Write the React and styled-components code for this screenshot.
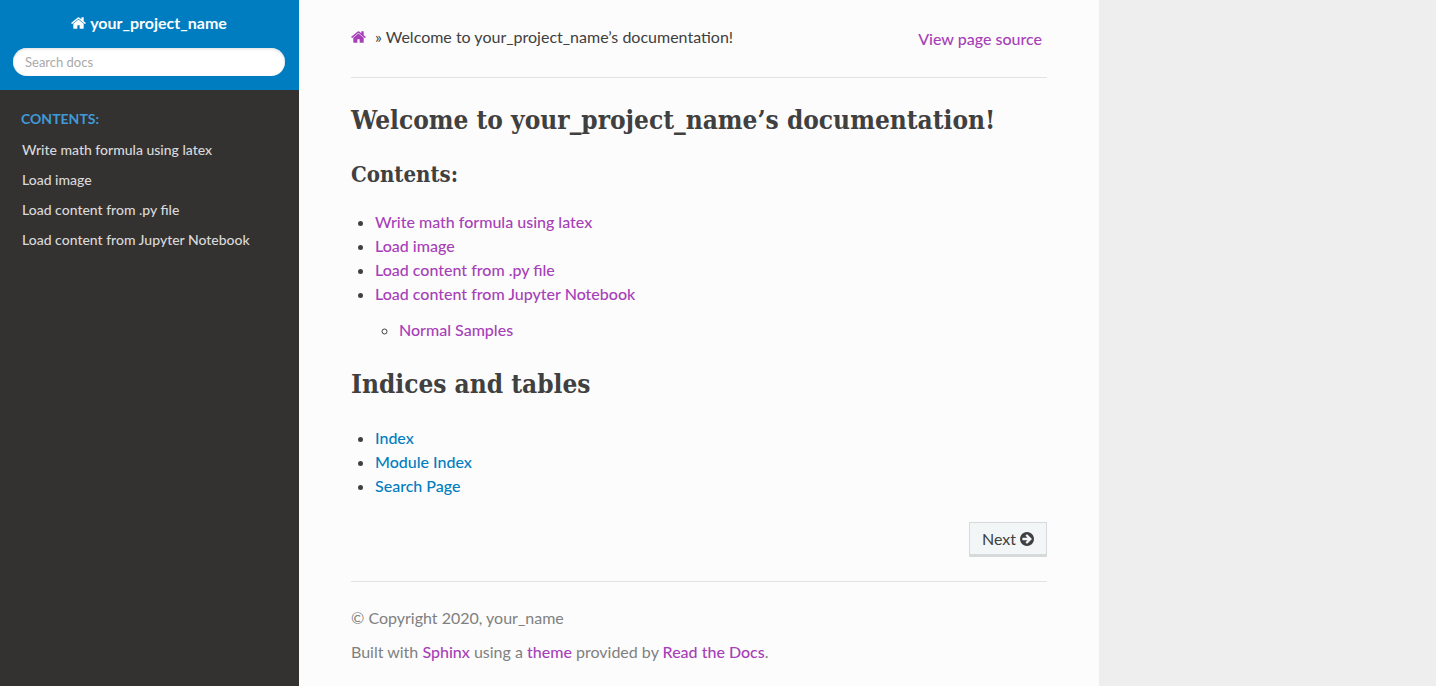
import React from "react";
import styled, { createGlobalStyle } from "styled-components";

const Global = createGlobalStyle`
  *, *::before, *::after { box-sizing: border-box; }
  body { margin: 0; background: #eeeeee; color: #404040; font: 400 16px/24px Lato, "Liberation Sans", sans-serif; }
`;
const slab = `"Roboto Slab", "DejaVu Serif Condensed", "DejaVu Serif", serif`;

const Page = styled.div`
  display: flex;
  align-items: stretch;
  min-height: 100vh;
`;
const Sidebar = styled.aside`
  flex: 0 0 299px;
  background: #343131;
`;
const SearchHeader = styled.header`
  display: flex;
  flex-direction: column;
  align-items: center;
  padding: 11px 14px 14px 13px;
  background: #007dc1;
`;
const ProjectLink = styled.a`
  display: flex;
  align-items: center;
  gap: 4px;
  margin-bottom: 13px;
  color: #fcfcfc;
  font-weight: 700;
  text-decoration: none;
`;
const SearchForm = styled.form`
  align-self: stretch;
`;
const SearchInput = styled.input`
  display: block;
  width: 100%;
  height: 28px;
  padding: 6px 12px;
  border: 0;
  border-radius: 50px;
  background: #ffffff;
  box-shadow: inset 0 1px 3px #dddddd;
  color: #404040;
  font: 13px/16px Lato, sans-serif;
  &::placeholder { color: #a9a9a9; opacity: 1; }
`;
const Caption = styled.p`
  margin: 13px 0 0;
  padding: 0 21px;
  color: #3f9bd8;
  font-size: 14px;
  line-height: 32px;
  font-weight: 700;
  text-transform: uppercase;
`;
const Menu = styled.ul`
  margin: 0;
  padding: 0;
  list-style: none;
`;
const MenuLink = styled.a`
  display: block;
  padding: 6px 22px;
  color: #d9d9d9;
  font-size: 14px;
  font-weight: 500;
  line-height: 18px;
  text-decoration: none;
`;
const Content = styled.div`
  flex: 0 1 800px;
  min-width: 0;
  padding: 25px 52px 12px;
  background: #fcfcfc;
`;
const Breadcrumbs = styled.nav`
  display: flex;
  justify-content: space-between;
  align-items: flex-start;
  padding: 0 5px 2px 0;
`;
const Trail = styled.div`
  display: flex;
  align-items: center;
  gap: 9px;
`;
const TextLink = styled.a`
  color: ${(p) => (p.$fresh ? "#007dc1" : "#a63fb8")};
  font-weight: 500;
  text-decoration: none;
`;
const HomeLink = styled(TextLink)`
  display: flex;
`;
const SourceLink = styled(TextLink)`
  padding-top: 2px;
`;
const Rule = styled.hr`
  height: 1px;
  margin: 24px 0;
  border: 0;
  background: #e1e4e5;
`;
const Title = styled.h1`
  margin: 0 0 24px;
  font: 700 26px/36px ${slab};
`;
const Subtitle = styled.p`
  margin: 0 0 24px;
  font: 700 22px/24px ${slab};
`;
const List = styled.ul`
  margin: 0 0 24px;
  padding: 0 0 0 24px;
`;
const SubList = styled.ul`
  margin: 12px 0 24px;
  padding: 0 0 0 24px;
  list-style: circle;
`;
const Pager = styled.div`
  display: flex;
  justify-content: flex-end;
`;
const NextButton = styled.button`
  display: flex;
  align-items: center;
  gap: 4px;
  padding: 4px 12px 6px;
  border: 1px solid #d6dadb;
  border-bottom: 0;
  border-radius: 1px;
  background: #f3f6f6;
  box-shadow: inset 0 -3px 0 #d6dadb;
  color: #404040;
  font: inherit;
`;
const Footer = styled.footer`
  color: #808080;
`;
const FooterLine = styled.p`
  margin: 0 0 10px;
`;

const HomeIcon = () => (
  <svg width="15" height="12" viewBox="64 256 1664 1280" fill="currentColor" aria-hidden="true">
    <path d="M1472 992v480q0 26-19 45t-45 19h-384v-384h-256v384h-384q-26 0-45-19t-19-45v-480q0-1 .5-3t.5-3l575-474 575 474q1 2 1 6zm223-69l-62 74q-8 9-21 11h-3q-13 0-21-7l-692-577-692 577q-12 8-24 7-13-2-21-11l-62-74q-8-10-7-23.5t11-21.5l719-599q32-26 76-26t76 26l244 204v-195q0-14 9-23t23-9h192q14 0 23 9t9 23v408l219 182q10 8 11 21.5t-7 23.5z" />
  </svg>
);
const ArrowIcon = () => (
  <svg width="14" height="14" viewBox="128 128 1536 1536" fill="currentColor" aria-hidden="true">
    <path d="M1413 896q0-27-18-45l-91-91-362-362q-18-18-45-18t-45 18l-91 91q-18 18-18 45t18 45l189 189h-502q-26 0-45 19t-19 45v128q0 26 19 45t45 19h502l-189 189q-19 19-19 45t19 45l91 91q18 18 45 18t45-18l362-362 91-91q18-18 18-45zm251 0q0 209-103 385.5t-279.5 279.5-385.5 103-385.5-103-279.5-279.5-103-385.5 103-385.5 279.5-279.5 385.5-103 385.5 103 279.5 279.5 103 385.5z" />
  </svg>
);

const docs = ["Write math formula using latex", "Load image", "Load content from .py file", "Load content from Jupyter Notebook"];

export default function App() {
  return (
    <>
      <Global />
      <Page>
        <Sidebar>
          <SearchHeader>
            <ProjectLink href="#"><HomeIcon />your_project_name</ProjectLink>
            <SearchForm role="search"><SearchInput type="text" aria-label="Search docs" placeholder="Search docs" /></SearchForm>
          </SearchHeader>
          <nav aria-label="Main">
            <Caption>Contents:</Caption>
            <Menu>{docs.map((d) => <li key={d}><MenuLink href="#">{d}</MenuLink></li>)}</Menu>
          </nav>
        </Sidebar>
        <Content>
          <Breadcrumbs aria-label="Breadcrumbs">
            <Trail><HomeLink href="#" aria-label="Home"><HomeIcon /></HomeLink><span>» Welcome to your_project_name’s documentation!</span></Trail>
            <SourceLink href="#">View page source</SourceLink>
          </Breadcrumbs>
          <Rule />
          <main>
            <Title>Welcome to your_project_name’s documentation!</Title>
            <Subtitle>Contents:</Subtitle>
            <List>
              {docs.map((d, i) => (
                <li key={d}><TextLink href="#">{d}</TextLink>
                  {i === 3 && <SubList><li><TextLink href="#">Normal Samples</TextLink></li></SubList>}
                </li>
              ))}
            </List>
            <Title>Indices and tables</Title>
            <List>
              {["Index", "Module Index", "Search Page"].map((d) => <li key={d}><TextLink $fresh href="#">{d}</TextLink></li>)}
            </List>
          </main>
          <Pager><NextButton type="button">Next <ArrowIcon /></NextButton></Pager>
          <Rule />
          <Footer>
            <FooterLine>© Copyright 2020, your_name</FooterLine>
            <FooterLine>Built with <TextLink href="#">Sphinx</TextLink> using a <TextLink href="#">theme</TextLink> provided by <TextLink href="#">Read the Docs</TextLink>.</FooterLine>
          </Footer>
        </Content>
      </Page>
    </>
  );
}
